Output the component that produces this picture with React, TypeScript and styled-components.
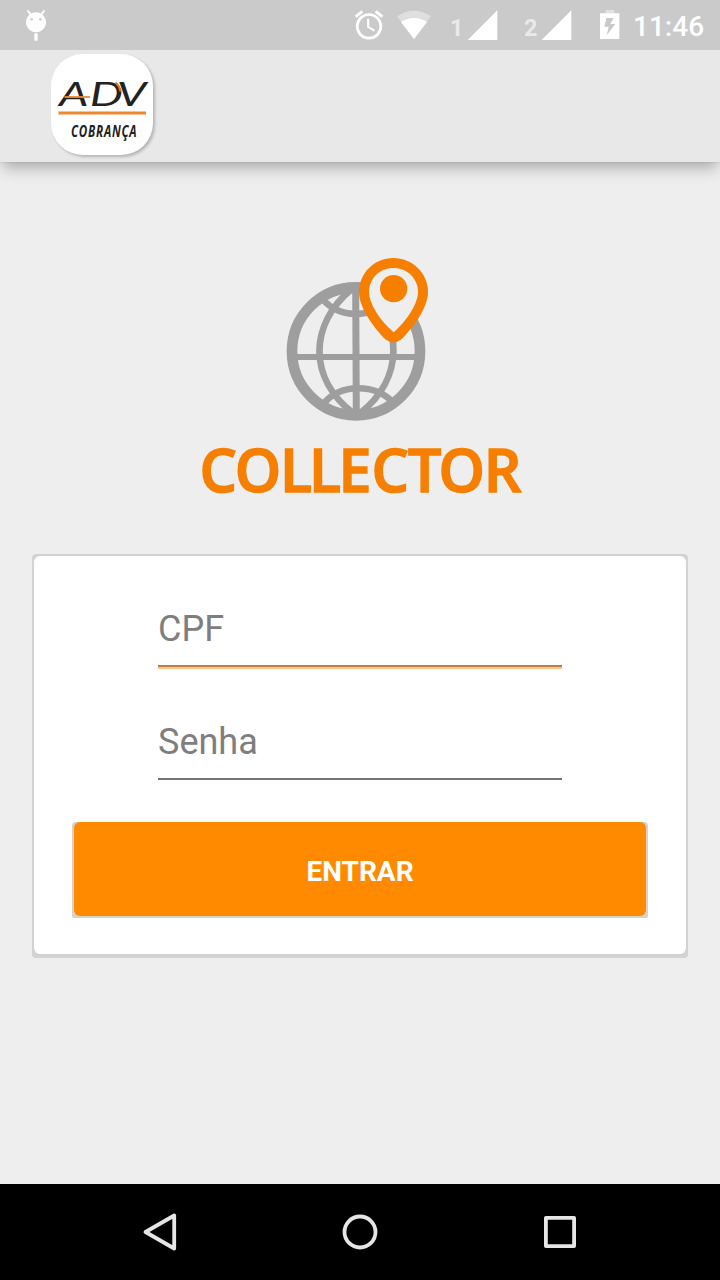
import React from "react";
import styled, { createGlobalStyle } from "styled-components";

const ORANGE = "#f77f00";
const GREY = "#9e9e9e";

const GlobalStyle = createGlobalStyle`
  *, *::before, *::after { box-sizing: border-box; }
  body { margin: 0; font-family: Roboto, sans-serif; }
  svg { display: block; flex: none; }
`;

const Screen = styled.div`
  width: 720px;
  height: 1280px;
  display: flex;
  flex-direction: column;
  background: #eeeeee;
  overflow: hidden;
`;

const StatusBar = styled.header`
  flex: none;
  height: 50px;
  display: flex;
  align-items: center;
  padding-left: 20px;
  background: #cacaca;
`;

const StatusIcon = styled.svg<{ $w: number; $gap?: number }>`
  width: ${(p) => p.$w}px;
  height: 50px;
  margin-left: ${(p) => p.$gap ?? 0}px;
  fill: #fff;
`;

const SimNumber = styled.span<{ $gap: number }>`
  width: 16px;
  margin-left: ${(p) => p.$gap}px;
  padding-top: 5px;
  font-size: 23.5px;
  line-height: 28px;
  font-weight: 700;
  color: #e9e9e9;
`;

const Clock = styled.time`
  margin-left: 11px;
  padding-top: 3px;
  font-size: 28px;
  line-height: 32px;
  font-weight: 500;
  color: #fff;
`;

const AppBar = styled.div`
  flex: none;
  height: 112px;
  padding: 4px 0 0 51px;
  background: #e8e8e8;
  box-shadow: 0 8px 15px -3px rgba(0, 0, 0, 0.31), 0 0 2px rgba(0, 0, 0, 0.14);
  clip-path: inset(0 0 -40px 0);
`;

const BrandTile = styled.div`
  width: 102px;
  height: 101px;
  border-radius: 32px;
  background: #fff;
  box-shadow: 2px 2px 3px rgba(0, 0, 0, 0.22);
`;

const Main = styled.main`
  flex: 1;
  display: flex;
  flex-direction: column;
  align-items: center;
  padding-top: 83px;
`;

const Card = styled.form`
  width: 656px;
  height: 404px;
  margin-top: 39px;
  padding: 2px 2px 4px;
  border-radius: 4px;
  background: #d2d2d2;
`;

const CardBody = styled.div`
  height: 100%;
  display: flex;
  flex-direction: column;
  align-items: center;
  padding-top: 40px;
  border-radius: 6px;
  background: #fff;
`;

const Field = styled.label<{ $focused?: boolean }>`
  width: 404px;
  height: 73px;
  margin-bottom: 40px;
  display: flex;
  flex-direction: column;
  justify-content: space-between;
  padding: 12px 0 0;
  font-size: 36px;
  line-height: 42px;
  color: #7e7e7e;

  &::after {
    content: "";
    height: 4px;
    border-top: 2px solid ${(p) => (p.$focused ? "#bb8040" : "#757575")};
    background: ${(p) => (p.$focused ? "#ffc485" : "transparent")};
  }
`;

const ButtonFrame = styled.div`
  width: 576px;
  height: 96px;
  padding: 0 2px 2px;
  border-radius: 4px 4px 2px 2px;
  background: #d6d3cf;
`;

const SubmitButton = styled.button`
  width: 100%;
  height: 100%;
  padding: 6px 0 0;
  border: 0;
  border-radius: 6px;
  background: #ff8a00;
  color: #fff;
  font: 700 28px/32px Roboto, sans-serif;
`;

const NavBar = styled.nav`
  flex: none;
  height: 96px;
  display: flex;
  align-items: center;
  justify-content: center;
  gap: 160px;
  background: #000;
`;

const NavIcon = styled.svg`
  width: 40px;
  height: 40px;
  fill: none;
  stroke: #e6e6e6;
  stroke-width: 3.8;
  stroke-linejoin: round;
`;

const AndroidIcon = () => (
  <StatusIcon $w={32} viewBox="60 0 96 150">
    <path d="M84 33L92 43M132 33L124 43" stroke="#fff" strokeWidth="6" strokeLinecap="round" />
    <path
      fillRule="evenodd"
      d="M108 37a30 30 0 1 0 .1 0zM95 54a4 4 0 1 1-.1 0zM121 54a4 4 0 1 1-.1 0z"
    />
    <rect x="103" y="100" width="10" height="22" rx="2" />
  </StatusIcon>
);

const AlarmIcon = () => (
  <StatusIcon $w={34} $gap={300} viewBox="36 0 102 150">
    <g fill="none" stroke="#fff" strokeWidth="8">
      <circle cx="87" cy="79" r="35.500" />
      <path d="M84.500 56V81L103 92" strokeWidth="6.500" />
      <path d="M47 50L67 34M127 50L107 34" strokeWidth="9" />
    </g>
  </StatusIcon>
);

const WifiIcon = () => (
  <StatusIcon $w={40} $gap={8} viewBox="162 0 120 150">
    <path d="M222 117L171 49Q222 15 273 49Z" opacity=".4" />
    <path d="M222 117L183 66Q222 42 261 66Z" />
  </StatusIcon>
);

const SignalIcon = () => (
  <StatusIcon $w={32} viewBox="378 0 96 150">
    <path d="M383 120L472 31V120Z" />
  </StatusIcon>
);

const BatteryIcon = () => (
  <StatusIcon $w={24} $gap={26} viewBox="264 0 72 150">
    <path d="M287 30H313V40H287Z" opacity=".45" />
    <path
      fillRule="evenodd"
      d="M270 40H328V117H270ZM289 54L283 80H296L290 106L316 72H301L311 54Z"
    />
  </StatusIcon>
);

const BrandMark = () => (
  <svg width="102" height="101" viewBox="51 54 102 101">
    <text
      x="41.500 63.200 82.200"
      y="106"
      fontFamily="Lato, sans-serif"
      fontStyle="italic"
      fontSize="33"
      fill="#222"
      transform="scale(1.42 1)"
    >
      ADV
    </text>
    <path d="M64.500 97H90" stroke="#ee8a35" strokeWidth="1.800" />
    <path d="M115.500 82.500Q119.500 86 120.500 91.500" fill="none" stroke="#d9722a" strokeWidth="2" />
    <path d="M58.500 113H146" stroke="#ee8730" strokeWidth="3.200" />
    <text
      x="94.700"
      y="137.500"
      fontFamily="'Open Sans', sans-serif"
      fontStyle="italic"
      fontWeight="700"
      fontSize="15.500"
      fill="#222"
      textLength="87.500"
      lengthAdjust="spacing"
      transform="scale(.75 1)"
    >
      COBRANÇA
    </text>
  </svg>
);

const GlobeLogo = () => (
  <svg width="180" height="180" viewBox="0 0 540 540">
    <g fill="none" stroke={GREY} strokeWidth="20">
      <circle cx="258" cy="319" r="192" strokeWidth="32" />
      <path d="M257 120L259 510" strokeWidth="21" />
      <path d="M75 336H440" strokeWidth="18" />
      <path d="M247 130C115 240 115 400 250 505" />
      <path d="M270 505C402 400 402 240 280 130" />
      <path d="M158 162C205 221 310 221 350 165" />
      <path d="M160 477C210 415 315 415 368 472" />
    </g>
    <path
      fill={ORANGE}
      d="M370 39C427 39 474 85 474 140C474 190 428 248 394 283Q370 302 346 283C312 248 267 190 267 140C267 85 313 39 370 39Z"
    />
    <path
      fill="#eeeeee"
      d="M370 69C411 69 444 100 444 141C444 175 412 225 371 262C328 225 297 175 297 141C297 100 330 69 370 69Z"
    />
    <circle cx="371" cy="131" r="41" fill={ORANGE} />
  </svg>
);

const Wordmark = () => (
  <svg width="340" height="90" viewBox="190 425 340 90">
    <text
      x="199.500 234.700 280 309 338.500 371.500 408 438.500 483.800"
      y="491.500"
      fontFamily="'Open Sans', sans-serif"
      fontWeight="600"
      fontSize="59"
      fill={ORANGE}
      stroke={ORANGE}
      strokeWidth="1.500"
    >
      COLLECTOR
    </text>
  </svg>
);

export default function App() {
  return (
    <Screen>
      <GlobalStyle />
      <StatusBar>
        <AndroidIcon />
        <AlarmIcon />
        <WifiIcon />
        <SimNumber $gap={16}>1</SimNumber>
        <SignalIcon />
        <SimNumber $gap={26}>2</SimNumber>
        <SignalIcon />
        <BatteryIcon />
        <Clock>11:46</Clock>
      </StatusBar>
      <AppBar>
        <BrandTile>
          <BrandMark />
        </BrandTile>
      </AppBar>
      <Main>
        <GlobeLogo />
        <Wordmark />
        <Card>
          <CardBody>
            <Field $focused>CPF</Field>
            <Field>Senha</Field>
            <ButtonFrame>
              <SubmitButton type="button">ENTRAR</SubmitButton>
            </ButtonFrame>
          </CardBody>
        </Card>
      </Main>
      <NavBar>
        <NavIcon viewBox="0 0 40 40">
          <path d="M5.500 20L34.200 3.500V36.500Z" />
        </NavIcon>
        <NavIcon viewBox="0 0 40 40">
          <circle cx="20" cy="20" r="15.500" />
        </NavIcon>
        <NavIcon viewBox="0 0 40 40">
          <rect x="5.900" y="5.900" width="28.200" height="28.200" />
        </NavIcon>
      </NavBar>
    </Screen>
  );
}
